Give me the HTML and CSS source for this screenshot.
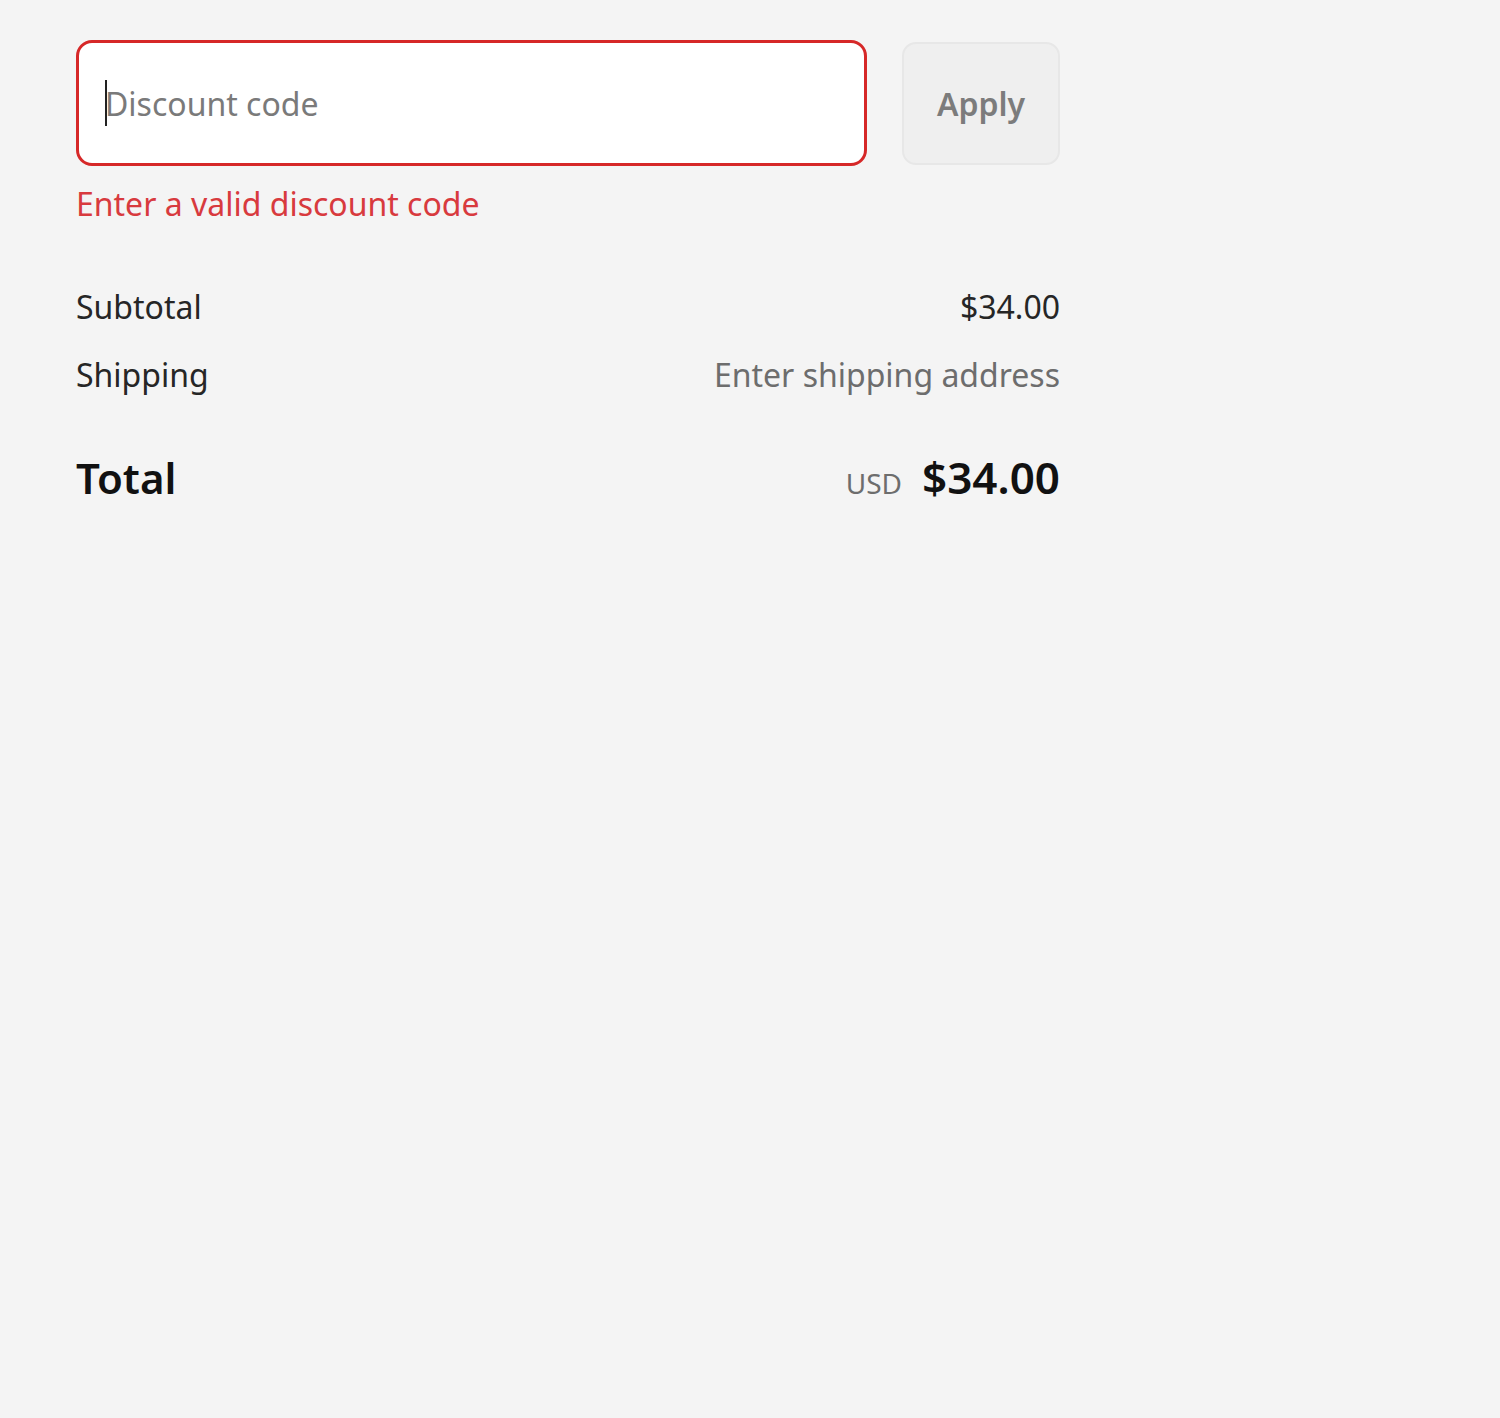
FILE: index.html
```html
<!DOCTYPE html>
<html lang="en">
<head>
<meta charset="utf-8">
<title>Discount</title>
<link rel="stylesheet" href="styles.css">
</head>
<body>
<main class="summary">
  <div class="discount">
    <div class="discount-row">
      <div class="field field--error">
        <span class="caret"></span><span class="placeholder">Discount code</span>
      </div>
      <button class="apply" type="button">Apply</button>
    </div>
    <p class="error">Enter a valid discount code</p>
  </div>
  <div class="lines">
    <div class="line">
      <span class="label">Subtotal</span>
      <span class="value">$34.00</span>
    </div>
    <div class="line">
      <span class="label">Shipping</span>
      <span class="value value--muted">Enter shipping address</span>
    </div>
  </div>
  <div class="total">
    <span class="total-label">Total</span>
    <span class="total-value"><span class="currency">USD</span><span class="amount">$34.00</span></span>
  </div>
</main>
</body>
</html>
```

FILE: styles.css
```css
html, body {
  margin: 0;
  padding: 0;
  background: #f4f4f4;
  font-family: "Noto Sans", "Open Sans", "Liberation Sans", sans-serif;
  color: #262626;
}
.summary {
  width: 984px;
  padding: 40px 0 0 76px;
}
.discount-row {
  display: flex;
  gap: 35px;
  align-items: center;
}
.field {
  flex: 1;
  height: 126px;
  box-sizing: border-box;
  background: #ffffff;
  border: 3px solid #d62828;
  border-radius: 16px;
  display: flex;
  align-items: center;
  padding-left: 26px;
}
.caret {
  display: inline-block;
  width: 2px;
  height: 46px;
  background: #222;
  margin-right: -2px;
  position: relative;
  z-index: 1;
}
.placeholder {
  font-size: 32px;
  color: #7a7a7a;
}
.apply {
  width: 158px;
  height: 123px;
  box-sizing: border-box;
  background: #efefef;
  border: 2px solid #e7e7e7;
  border-radius: 14px;
  font-family: inherit;
  font-size: 32px;
  font-weight: 600;
  color: #7c7c7c;
  padding: 0;
}
.error {
  margin: 16px 0 0;
  color: #d83a3e;
  font-size: 32px;
  line-height: 44px;
}
.lines {
  margin-top: 59px;
  display: flex;
  flex-direction: column;
  gap: 24px;
}
.line {
  display: flex;
  justify-content: space-between;
  align-items: baseline;
  font-size: 32px;
  line-height: 44px;
}
.value--muted {
  color: #6d6d6d;
}
.total {
  margin-top: 50px;
  display: flex;
  justify-content: space-between;
  align-items: baseline;
}
.total-label {
  font-size: 42px;
  font-weight: 600;
  color: #111;
}
.total-value {
  display: flex;
  align-items: baseline;
  gap: 20px;
}
.currency {
  font-size: 28px;
  color: #6d6d6d;
}
.amount {
  font-size: 44px;
  font-weight: 600;
  color: #111;
}
```
